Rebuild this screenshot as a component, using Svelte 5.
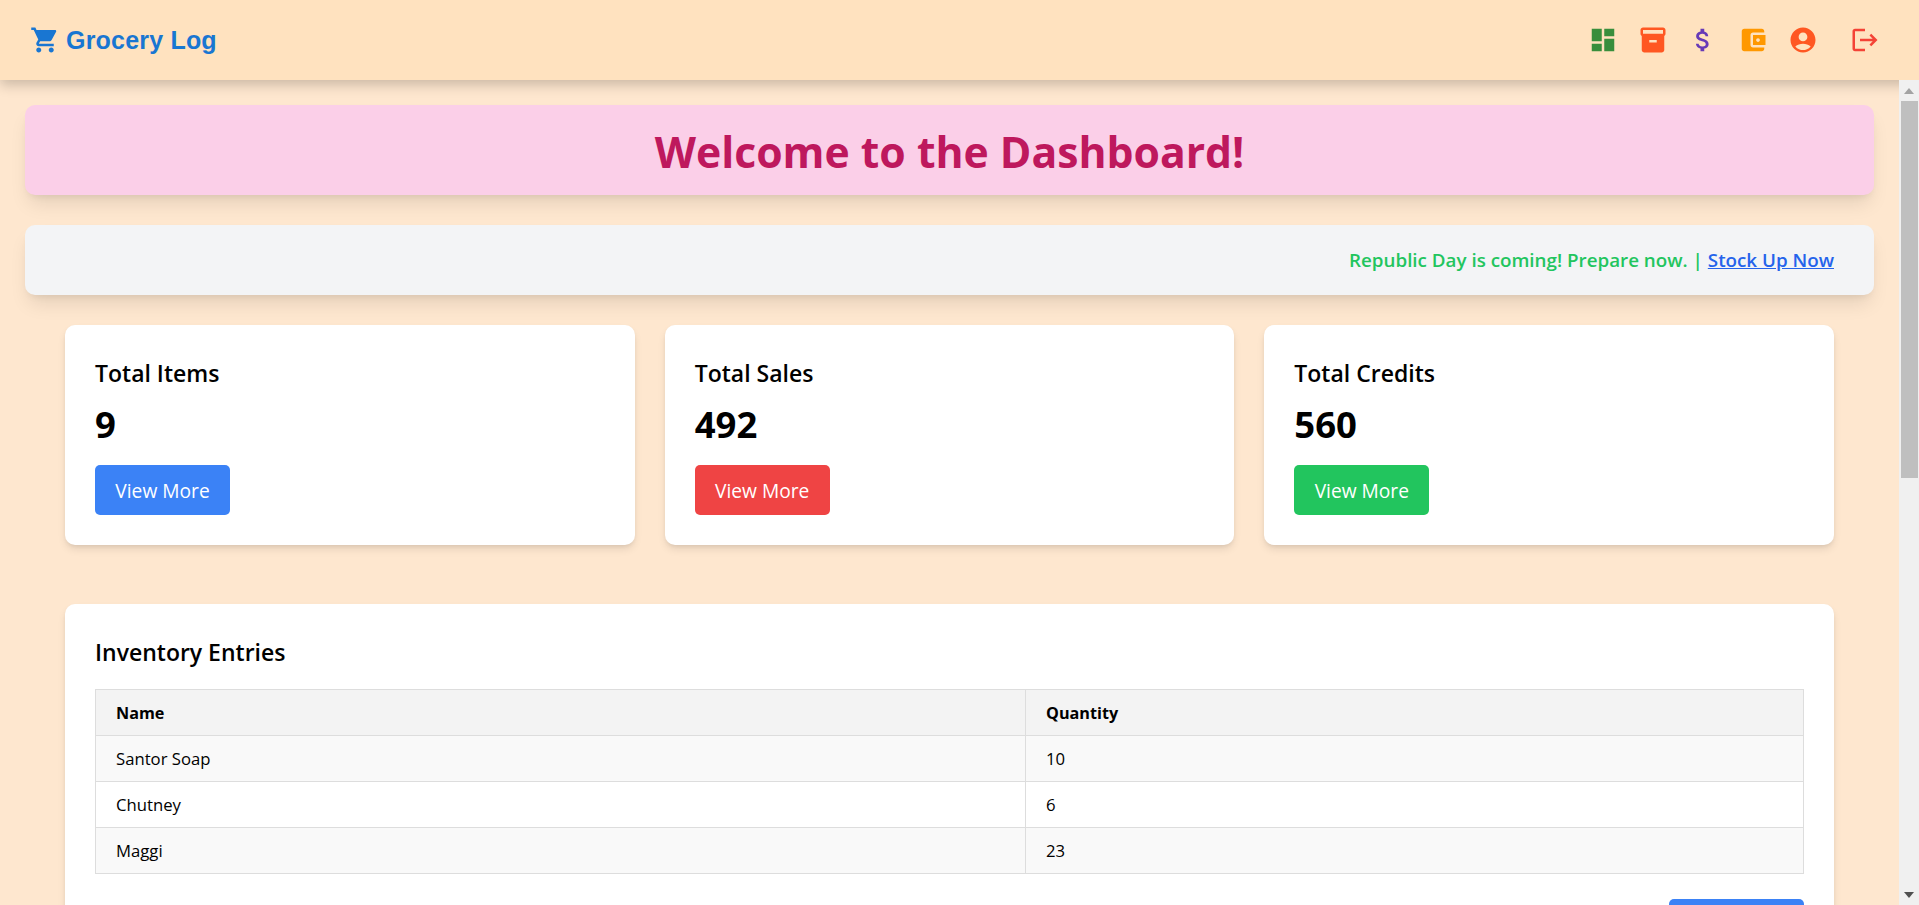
<script lang="ts">
	const navIcons = [
		{ color: '#388e3c', d: 'M3 13h8V3H3v10zm0 8h8v-6H3v6zm10 0h8V11h-8v10zm0-18v6h8V3h-8z' },
		{ color: '#ff5722', d: 'M20 2H4c-1 0-2 .9-2 2v3.01c0 .72.43 1.34 1 1.69V20c0 1.1 1.1 2 2 2h14c.9 0 2-.9 2-2V8.7c.57-.35 1-.97 1-1.69V4c0-1.1-1-2-2-2zm-5 12H9v-2h6v2zm5-7H4V4l16-.02V7z' },
		{ color: '#673ab7', d: 'M11.8 10.9c-2.27-.59-3-1.2-3-2.15 0-1.09 1.01-1.85 2.7-1.85 1.78 0 2.44.85 2.5 2.1h2.21c-.07-1.72-1.12-3.3-3.21-3.81V3h-3v2.16c-1.94.42-3.5 1.68-3.5 3.61 0 2.31 1.91 3.46 4.7 4.13 2.5.6 3 1.48 3 2.41 0 .69-.49 1.79-2.7 1.79-2.06 0-2.87-.92-2.98-2.1h-2.2c.12 2.19 1.76 3.42 3.68 3.83V21h3v-2.15c1.95-.37 3.5-1.5 3.5-3.55 0-2.84-2.43-3.81-4.7-4.4z' },
		{ color: '#ff9800', d: 'M21 18v1c0 1.1-.9 2-2 2H5c-1.11 0-2-.9-2-2V5c0-1.1.89-2 2-2h14c1.1 0 2 .9 2 2v1h-9c-1.11 0-2 .9-2 2v8c0 1.1.89 2 2 2h9zm-9-2h10V8H12v8zm4-2.5c-.83 0-1.5-.67-1.5-1.5s.67-1.5 1.5-1.5 1.5.67 1.5 1.5-.67 1.5-1.5 1.5z' },
		{ color: '#ff5722', d: 'M12 2C6.48 2 2 6.48 2 12s4.48 10 10 10 10-4.48 10-10S17.52 2 12 2zm0 4c1.93 0 3.5 1.57 3.5 3.5S13.93 13 12 13s-3.5-1.57-3.5-3.5S10.07 6 12 6zm0 14c-2.03 0-4.43-.82-6.14-2.88C7.55 15.8 9.68 15 12 15s4.45.8 6.14 2.12C16.43 19.18 14.03 20 12 20z' }
	];

	const stats = [
		{ label: 'Total Items', value: 9, tone: 'blue' },
		{ label: 'Total Sales', value: 492, tone: 'red' },
		{ label: 'Total Credits', value: 560, tone: 'green' }
	];

	const inventory = [
		{ name: 'Santor Soap', quantity: 10 },
		{ name: 'Chutney', quantity: 6 },
		{ name: 'Maggi', quantity: 23 }
	];
</script>

<div class="page">
	<header class="topbar">
		<a class="brand" href="#home">
			<svg viewBox="0 0 24 24" class="icon" fill="#1976d2"><path d="M7 18c-1.1 0-1.99.9-1.99 2S5.9 22 7 22s2-.9 2-2-.9-2-2-2zM1 2v2h2l3.6 7.59-1.35 2.45c-.16.28-.25.61-.25.96 0 1.1.9 2 2 2h12v-2H7.42c-.14 0-.25-.11-.25-.25l.03-.12.9-1.63h7.45c.75 0 1.41-.41 1.75-1.03l3.58-6.49c.08-.14.12-.31.12-.48 0-.55-.45-1-1-1H5.21l-.94-2H1zm16 16c-1.1 0-1.99.9-1.99 2s.89 2 1.99 2 2-.9 2-2-.9-2-2-2z" /></svg>
			<span>Grocery Log</span>
		</a>
		<nav class="nav">
			{#each navIcons as item}
				<svg viewBox="0 0 24 24" class="icon" fill={item.color}><path d={item.d} /></svg>
			{/each}
			<svg viewBox="0 0 24 24" class="icon logout" fill="#f44336"><path d="M17 7l-1.41 1.41L18.17 11H8v2h10.17l-2.58 2.58L17 17l5-5zM4 5h8V3H4c-1.1 0-2 .9-2 2v14c0 1.1.9 2 2 2h8v-2H4V5z" /></svg>
		</nav>
	</header>

	<div class="body">
		<main class="content">
			<section class="welcome">
				<h1>Welcome to the Dashboard!</h1>
			</section>

			<section class="notice">
				<p>Republic Day is coming! Prepare now. | <a href="#stock">Stock Up Now</a></p>
			</section>

			<div class="stats">
				{#each stats as stat}
					<div class="card stat">
						<h2>{stat.label}</h2>
						<p class="value">{stat.value}</p>
						<button class={stat.tone}>View More</button>
					</div>
				{/each}
			</div>

			<section class="card entries">
				<h2>Inventory Entries</h2>
				<table>
					<thead>
						<tr>
							<th class="name">Name</th>
							<th>Quantity</th>
						</tr>
					</thead>
					<tbody>
						{#each inventory as row}
							<tr>
								<td>{row.name}</td>
								<td>{row.quantity}</td>
							</tr>
						{/each}
					</tbody>
				</table>
				<div class="actions">
					<div class="more blue"></div>
				</div>
			</section>
		</main>

		<!-- page scrollbar as the browser drew it -->
		<div class="scrollbar">
			<div class="arrow">
				<svg width="10" height="6" viewBox="0 0 10 6"><path d="M5 0l5 6H0z" fill="#a3a3a3" /></svg>
			</div>
			<div class="thumb"></div>
			<div class="rail"></div>
			<div class="arrow">
				<svg width="10" height="6" viewBox="0 0 10 6"><path d="M5 6L0 0h10z" fill="#505050" /></svg>
			</div>
		</div>
	</div>
</div>

<style>
	:global(body) {
		margin: 0;
		font-family: 'Open Sans', 'Noto Sans', sans-serif;
		color: #000;
	}

	.page {
		height: 100vh;
		display: flex;
		flex-direction: column;
		overflow: hidden;
		background: #fee7cf;
	}

	.topbar {
		flex: 0 0 80px;
		display: flex;
		align-items: center;
		justify-content: space-between;
		padding: 0 39px 0 30px;
		background: #ffe2bf;
		box-shadow: 0 5px 12px rgba(0, 0, 0, 0.2);
		position: relative;
		z-index: 2;
	}

	.brand {
		display: flex;
		align-items: center;
		gap: 6px;
		color: #1976d2;
		text-decoration: none;
		font-family: 'Liberation Sans', Arial, sans-serif;
		font-size: 25px;
		font-weight: 700;
		letter-spacing: 0.2px;
	}

	.icon {
		width: 30px;
		height: 30px;
		display: block;
	}

	.nav {
		display: flex;
		gap: 20px;
	}

	.logout {
		margin-left: 12px;
	}

	.body {
		flex: 1;
		min-height: 0;
		display: flex;
	}

	.content {
		flex: 1;
		min-width: 0;
		overflow: hidden;
		padding: 25px 25px 0;
	}

	.scrollbar {
		flex: 0 0 20px;
		display: flex;
		flex-direction: column;
		background: #f0f0f0;
		position: relative;
		z-index: 3;
	}

	.arrow {
		flex: 0 0 21px;
		display: flex;
		align-items: center;
		justify-content: center;
	}

	.thumb {
		flex: 0 0 377px;
		margin: 0 1px 0 2px;
		background: #bfbfbf;
	}

	.rail {
		flex: 1;
	}

	.welcome {
		background: #fbcfe8;
		border-radius: 10px;
		padding: 17px 15px 13px;
		text-align: center;
		box-shadow: 0 12px 19px -4px rgba(0, 0, 0, 0.1), 0 5px 8px -5px rgba(0, 0, 0, 0.1);
	}

	h1 {
		margin: 0;
		font-size: 42.7px;
		line-height: 60px;
		font-weight: 700;
		color: #be185d;
	}

	.notice {
		margin-top: 30px;
		background: #f3f4f6;
		border-radius: 10px;
		padding: 20px 40px;
		text-align: right;
		box-shadow: 0 12px 19px -4px rgba(0, 0, 0, 0.1), 0 5px 8px -5px rgba(0, 0, 0, 0.1);
	}

	.notice p {
		margin: 0;
		font-size: 18.8px;
		line-height: 30px;
		font-weight: 600;
		color: #22c55e;
	}

	.notice a {
		color: #2563eb;
	}

	.stats {
		display: grid;
		grid-template-columns: repeat(3, 1fr);
		gap: 30px;
		padding: 30px 40px 0;
	}

	.card {
		background: #fff;
		border-radius: 10px;
		padding: 30px;
		box-shadow: 0 5px 8px -1px rgba(0, 0, 0, 0.1), 0 2px 5px -2px rgba(0, 0, 0, 0.1);
	}

	.stat h2,
	.entries h2 {
		margin: 0;
		font-size: 23px;
		line-height: 37px;
		font-weight: 600;
	}

	.value {
		margin: 7px 0 16px;
		font-size: 36.5px;
		line-height: 50px;
		font-weight: 700;
	}

	button {
		display: block;
		height: 50px;
		width: 135px;
		padding: 0;
		border: 0;
		border-radius: 5px;
		font: inherit;
		font-size: 19.2px;
		color: #fff;
	}

	.blue {
		background: #3b82f6;
	}

	.red {
		background: #ef4444;
	}

	.green {
		background: #22c55e;
	}

	.entries {
		margin: 59px 40px 0;
	}

	.entries h2 {
		margin-bottom: 18px;
	}

	table {
		width: 100%;
		border-collapse: collapse;
		font-size: 16.7px;
	}

	th,
	td {
		height: 46px;
		box-sizing: border-box;
		padding: 0 20px;
		text-align: left;
		border: 1px solid #ddd;
	}

	th {
		background: #f3f3f3;
		font-size: 16.2px;
		font-weight: 700;
	}

	th.name {
		width: 54.45%;
	}

	tbody tr:nth-child(odd) {
		background: #f9f9f9;
	}

	.actions {
		display: flex;
		justify-content: flex-end;
		margin-top: 25px;
	}

	.more {
		width: 135px;
		height: 50px;
		border-radius: 5px;
	}
</style>
